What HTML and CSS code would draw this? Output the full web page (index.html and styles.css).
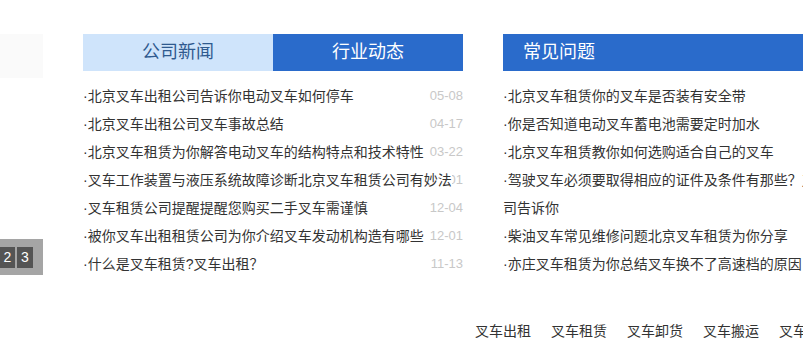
FILE: index.html
```html
<!DOCTYPE html>
<html lang="zh-CN">
<head>
    <meta charset="UTF-8">
    <title>叉车租赁</title>
    <link rel="stylesheet" href="styles.css">
</head>
<body>
    <div class="main">
        <!-- 图片轮播 -->
        <div class="slider">
            <div class="slider-pic"></div>
            <div class="slider-nav">
                <span>2</span><span>3</span>
            </div>
        </div>

        <!-- 新闻 -->
        <div class="news">
            <div class="tabs">
                <span class="tab">公司新闻</span>
                <span class="tab active">行业动态</span>
            </div>
            <ul class="list">
                <li><a href="#">·北京叉车出租公司告诉你电动叉车如何停车</a><span class="date">05-08</span></li>
                <li><a href="#">·北京叉车出租公司叉车事故总结</a><span class="date">04-17</span></li>
                <li><a href="#">·北京叉车租赁为你解答电动叉车的结构特点和技术特性</a><span class="date">03-22</span></li>
                <li><a href="#">·叉车工作装置与液压系统故障诊断北京叉车租赁公司有妙法</a><span class="date">03-01</span></li>
                <li><a href="#">·叉车租赁公司提醒提醒您购买二手叉车需谨慎</a><span class="date">12-04</span></li>
                <li><a href="#">·被你叉车出租租赁公司为你介绍叉车发动机构造有哪些</a><span class="date">12-01</span></li>
                <li><a href="#">·什么是叉车租赁?叉车出租？</a><span class="date">11-13</span></li>
            </ul>
        </div>

        <!-- 常见问题 -->
        <div class="faq">
            <div class="faq-title">常见问题</div>
            <ul class="faq-list">
                <li><a href="#">·北京叉车租赁你的叉车是否装有安全带</a></li>
                <li><a href="#">·你是否知道电动叉车蓄电池需要定时加水</a></li>
                <li><a href="#">·北京叉车租赁教你如何选购适合自己的叉车</a></li>
                <li><a href="#">·驾驶叉车必须要取得相应的证件及条件有那些？叉车租赁公司告诉你</a></li>
                <li><a href="#">·柴油叉车常见维修问题北京叉车租赁为你分享</a></li>
                <li><a href="#">·亦庄叉车租赁为你总结叉车换不了高速档的原因</a></li>
            </ul>
        </div>
    </div>

    <div class="links">
        <a href="#">叉车出租</a>
        <a href="#">叉车租赁</a>
        <a href="#">叉车卸货</a>
        <a href="#">叉车搬运</a>
        <a href="#">叉车维修</a>
    </div>
</body>
</html>
```

FILE: styles.css
```css
* {
    margin: 0;
    padding: 0;
    box-sizing: border-box;
}
body {
    font-family: "Liberation Sans", "Noto Sans CJK SC", sans-serif;
    font-size: 14px;
    color: #333;
    background: #fff;
    overflow: hidden;
    width: 803px;
    height: 363px;
}
a {
    color: #333;
    text-decoration: none;
}
ul {
    list-style: none;
}
.main {
    display: flex;
    gap: 40px;
    padding-top: 34px;
}
.slider {
    width: 43px;
    flex-shrink: 0;
    display: flex;
    flex-direction: column;
    height: 241px;
}
.slider-pic {
    height: 44px;
    background: #fafafa;
}
.slider-nav {
    margin-top: auto;
    height: 36px;
    background: #a5a5a5;
    display: flex;
    justify-content: flex-end;
    align-items: center;
    gap: 2px;
    padding-right: 10px;
}
.slider-nav span {
    display: block;
    flex-shrink: 0;
    width: 15px;
    height: 21px;
    line-height: 21px;
    text-align: center;
    background: #545454;
    color: #fff;
    font-size: 14px;
}
.slider-nav span:last-child {
    width: 16px;
}
.news {
    width: 380px;
    flex-shrink: 0;
}
.tabs {
    display: flex;
    height: 37px;
}
.tab {
    flex: 1;
    text-align: center;
    line-height: 37px;
    font-size: 18px;
    background: #cfe4fb;
    color: #2f5a8f;
}
.tab.active {
    background: #2a6bcb;
    color: #fff;
}
.list {
    padding-top: 11px;
}
.list li {
    display: grid;
    height: 28px;
    line-height: 28px;
}
.list li > * {
    grid-area: 1 / 1;
}
.list li a {
    white-space: nowrap;
    justify-self: start;
    background: #fff;
    position: relative;
    z-index: 1;
}
.date {
    justify-self: end;
    color: #c8c8c8;
    font-size: 13px;
}
.faq {
    width: 372px;
    flex-shrink: 0;
}
.faq-title {
    height: 37px;
    line-height: 37px;
    font-size: 18px;
    color: #fff;
    background: #2a6bcb;
    padding-left: 20px;
}
.faq-list {
    padding-top: 11px;
}
.faq-list li {
    line-height: 28px;
}
.links {
    display: flex;
    gap: 20px;
    padding-left: 475px;
    margin-top: 42px;
    white-space: nowrap;
}
```
